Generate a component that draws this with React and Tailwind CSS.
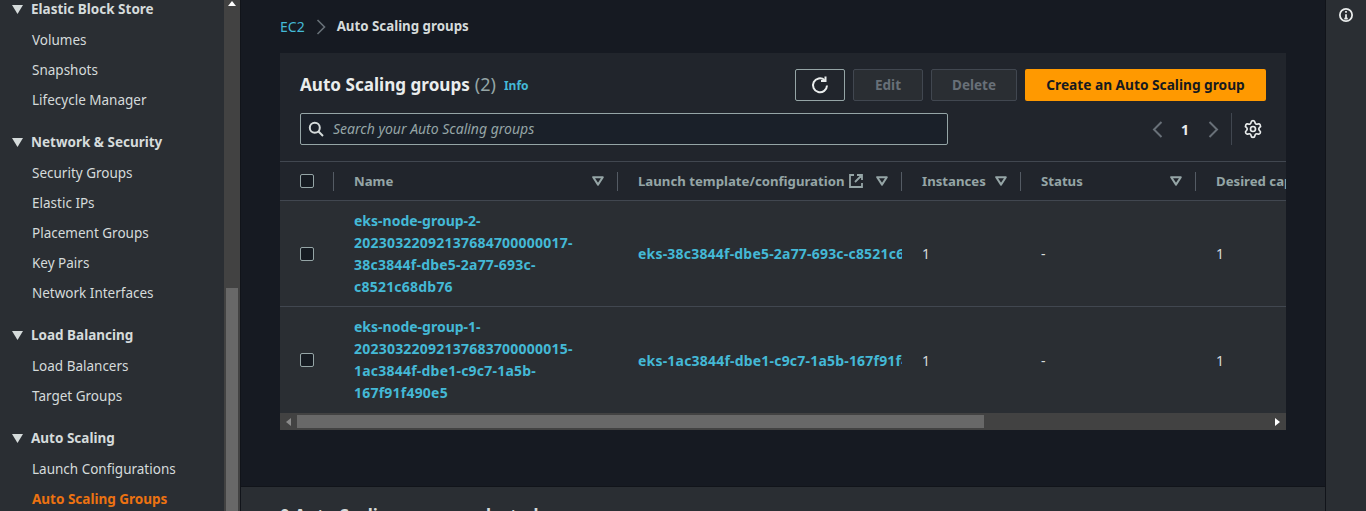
import React from "react";
import { Settings } from "lucide-react";

const sidebar = [
  { title: "Elastic Block Store", items: ["Volumes", "Snapshots", "Lifecycle Manager"] },
  { title: "Network & Security", items: ["Security Groups", "Elastic IPs", "Placement Groups", "Key Pairs", "Network Interfaces"] },
  { title: "Load Balancing", items: ["Load Balancers", "Target Groups"] },
  { title: "Auto Scaling", items: ["Launch Configurations", "Auto Scaling Groups"] },
];

const rows = [
  {
    name: ["eks-node-group-2-", "20230322092137684700000017-", "38c3844f-dbe5-2a77-693c-", "c8521c68db76"],
    template: "eks-38c3844f-dbe5-2a77-693c-c8521c68db76",
  },
  {
    name: ["eks-node-group-1-", "20230322092137683700000015-", "1ac3844f-dbe1-c9c7-1a5b-", "167f91f490e5"],
    template: "eks-1ac3844f-dbe1-c9c7-1a5b-167f91f490e5",
  },
];

function FilterIcon() {
  return (
    <svg width="12" height="10" viewBox="0 0 12 10" className="shrink-0">
      <path d="M1.2 1.2h9.6L6 8.6z" fill="none" stroke="#95a5a6" strokeWidth="2" strokeLinejoin="round" />
    </svg>
  );
}

function Checkbox() {
  return <div className="w-[14px] h-[14px] rounded-[2px] border border-[#95a5a6] bg-[#161b22]" />;
}

function HeaderCell({ width, label, children, last }) {
  return (
    <div className={`${width} shrink-0 h-full flex items-center justify-between pl-[20px] pr-[14px] relative`}>
      <span className="font-bold text-[13.2px] text-[#95a5a6] whitespace-nowrap pt-[2px]">{label}</span>
      {children}
      {!last && <div className="absolute right-0 top-[10px] h-[19px] w-px bg-[#545b64]" />}
    </div>
  );
}

export default function App() {
  return (
    <div className="w-[1366px] h-[511px] flex overflow-hidden bg-[#161a22] text-[14px] font-['Noto_Sans',sans-serif] text-[#d5dbdb]">
      {/* left nav */}
      <aside className="w-[224px] shrink-0 bg-[#2a2e33] text-[13.5px]">
        {sidebar.map((group) => (
          <div key={group.title} className="mb-[18px]">
            <div className="h-[18px] flex items-center pl-[12px] gap-[8px] font-bold text-[#d5dbdb]">
              <svg width="11" height="9" viewBox="0 0 11 9"><path d="M0 0h11L5.5 9z" fill="#d5dbdb" /></svg>
              {group.title}
            </div>
            <div className="mt-[7px]">
              {group.items.map((item) => (
                <div
                  key={item}
                  className={`h-[30px] flex items-center pl-[32px] ${item === "Auto Scaling Groups" ? "text-[#ec7211] font-bold" : ""}`}
                >
                  {item}
                </div>
              ))}
            </div>
          </div>
        ))}
      </aside>

      {/* page scrollbar */}
      <div className="w-[16px] shrink-0 bg-[#424242] flex flex-col items-center justify-between pt-[1px]">
        <svg width="8" height="5" viewBox="0 0 8 5"><path d="M4 0l4 5H0z" fill="#fff" /></svg>
        <div className="w-[12px] h-[223px] bg-[#686868]" />
      </div>

      {/* main */}
      <main className="w-[1086px] shrink-0 flex flex-col border-l border-[#11141a] border-r">
        <div className="flex-1 min-h-0 pl-[39px] pr-[39px]">
          <div className="h-[53px] flex items-center">
            <span className="text-[#44b9d6]">EC2</span>
            <svg width="10" height="16" viewBox="0 0 10 16" className="mx-[11px]">
              <path d="M1.5 1l7 7-7 7" fill="none" stroke="#687078" strokeWidth="1.6" />
            </svg>
            <span className="font-bold text-[13.3px] text-[#d5dbdb]">Auto Scaling groups</span>
          </div>

          <section className="h-[377px] bg-[#21252c] flex flex-col overflow-hidden">
            {/* card header */}
            <div className="h-[109px] shrink-0 border-b border-[#414750] px-[20px] pt-[16px]">
              <div className="flex items-center h-[32px]">
                <h1 className="text-[17.1px] font-bold text-[#eaeded] pb-[1px]">Auto Scaling groups</h1>
                <span className="text-[18px] text-[#95a5a6] ml-[5px] pb-[1px]">(2)</span>
                <span className="text-[12px] font-bold text-[#44b9d6] ml-[8px] mt-[1px]">Info</span>
                <button className="ml-auto w-[50px] h-[32px] rounded-[2px] border border-[#95a5a6] flex items-center justify-center">
                  <svg width="18" height="18" viewBox="0 0 18 18" fill="none" stroke="#eaeded" strokeWidth="2">
                    <path d="M16 9.500a7 7 0 1 1-2.500-5.600" />
                    <path d="M14.500 0.500v4.500h-4.500" />
                  </svg>
                </button>
                <button className="ml-[8px] w-[70px] h-[32px] rounded-[2px] border border-[#414750] bg-[#2a2e33] font-bold text-[13.5px] text-[#687078]">Edit</button>
                <button className="ml-[8px] w-[86px] h-[32px] rounded-[2px] border border-[#414750] bg-[#2a2e33] font-bold text-[13.5px] text-[#687078]">Delete</button>
                <button className="ml-[8px] w-[241px] h-[32px] rounded-[2px] bg-[#ff9900] font-bold text-[13.7px] text-[#16191f]">Create an Auto Scaling group</button>
              </div>
              <div className="flex items-center mt-[12px] h-[32px]">
                <div className="w-[648px] h-[32px] rounded-[2px] border border-[#95a5a6] bg-[#1a2029] flex items-center pl-[7px] gap-[9px]">
                  <svg width="16" height="16" viewBox="0 0 16 16" fill="none" stroke="#d5dbdb" strokeWidth="2">
                    <circle cx="6.800" cy="6.800" r="5" />
                    <path d="M10.500 10.500l4.500 4.500" />
                  </svg>
                  <span className="italic text-[#95a5a6] pb-[2px]">Search your Auto Scaling groups</span>
                </div>
                <div className="ml-auto flex items-center">
                  <svg width="11" height="17" viewBox="0 0 11 17" fill="none" stroke="#687078" strokeWidth="2">
                    <path d="M9.500 1l-7.500 7.500 7.500 7.500" />
                  </svg>
                  <span className="ml-[18px] mr-[19px] font-bold text-[#eaeded]">1</span>
                  <svg width="11" height="17" viewBox="0 0 11 17" fill="none" stroke="#687078" strokeWidth="2">
                    <path d="M1.500 1l7.500 7.500-7.500 7.500" />
                  </svg>
                  <div className="w-px h-[32px] bg-[#414750] ml-[12px] mr-[11px]" />
                  <Settings size={20} color="#eaeded" strokeWidth={2} className="mr-[3px]" />
                </div>
              </div>
            </div>

            {/* table head */}
            <div className="h-[39px] shrink-0 flex border-b border-[#414750]">
              <div className="w-[54px] shrink-0 h-full flex items-center pl-[20px] relative">
                <Checkbox />
                <div className="absolute right-0 top-[10px] h-[19px] w-px bg-[#545b64]" />
              </div>
              <HeaderCell width="w-[284px]" label="Name"><FilterIcon /></HeaderCell>
              <HeaderCell width="w-[284px]" label={
                <span className="flex items-center gap-[4px]">
                  Launch template/configuration
                  <svg width="16" height="16" viewBox="0 0 16 16" fill="none" stroke="#95a5a6" strokeWidth="1.800" className="-mt-[2px]">
                    <path d="M6 2H2v12h12v-4M9 2h5v5M14 2L7 9" />
                  </svg>
                </span>
              }><FilterIcon /></HeaderCell>
              <HeaderCell width="w-[119px]" label="Instances"><FilterIcon /></HeaderCell>
              <HeaderCell width="w-[175px]" label="Status"><FilterIcon /></HeaderCell>
              <HeaderCell width="w-[175px]" label="Desired capacity" last />
            </div>

            {/* rows */}
            {rows.map((row, i) => (
              <div key={row.template} className={`${i === 0 ? "border-b border-[#414750]" : ""} h-[106px] shrink-0 flex items-center bg-[#2a2e33]`}>
                <div className="w-[54px] shrink-0 pl-[20px]"><Checkbox /></div>
                <div className="w-[284px] shrink-0 pl-[20px] font-bold text-[#44b9d6] leading-[22px]">
                  {row.name.map((line, n) => (
                    <div key={line} className={n === 0 ? "" : "tracking-[0.22px]"}>{line}</div>
                  ))}
                </div>
                <div className="w-[264px] ml-[20px] shrink-0 font-bold text-[#44b9d6] tracking-[0.2px] whitespace-nowrap overflow-hidden">{row.template}</div>
                <div className="w-[119px] shrink-0 pl-[20px]">1</div>
                <div className="w-[175px] shrink-0 pl-[20px]">-</div>
                <div className="w-[175px] shrink-0 pl-[20px]">1</div>
              </div>
            ))}

            {/* table scrollbar */}
            <div className="h-[17px] shrink-0 bg-[#424242] flex items-center">
              <div className="w-[17px] flex justify-center">
                <svg width="5" height="8" viewBox="0 0 5 8"><path d="M0 4l5-4v8z" fill="#8a8a8a" /></svg>
              </div>
              <div className="w-[687px] h-[13px] bg-[#686868]" />
              <div className="ml-auto w-[17px] flex justify-center">
                <svg width="5" height="8" viewBox="0 0 5 8"><path d="M5 4L0 0v8z" fill="#fff" /></svg>
              </div>
            </div>
          </section>
        </div>

        {/* details panel, cut off by the window */}
        <div className="h-[25px] shrink-0 bg-[#2a2e33] border-t border-[#11141a] pl-[39px] pt-[16px] overflow-hidden">
          <span className="text-[17px] font-bold text-[#d5dbdb] whitespace-nowrap">0 Auto Scaling groups selected</span>
        </div>
      </main>

      {/* right tools rail */}
      <div className="flex-1 bg-[#2a2e33] flex justify-center pt-[8px]">
        <svg width="14" height="14" viewBox="0 0 16 16" fill="none" stroke="#eaeded" strokeWidth="2">
          <circle cx="8" cy="8" r="7" />
          <path d="M8 7v5M6 12h4M8 3.500v2" />
        </svg>
      </div>
    </div>
  );
}
